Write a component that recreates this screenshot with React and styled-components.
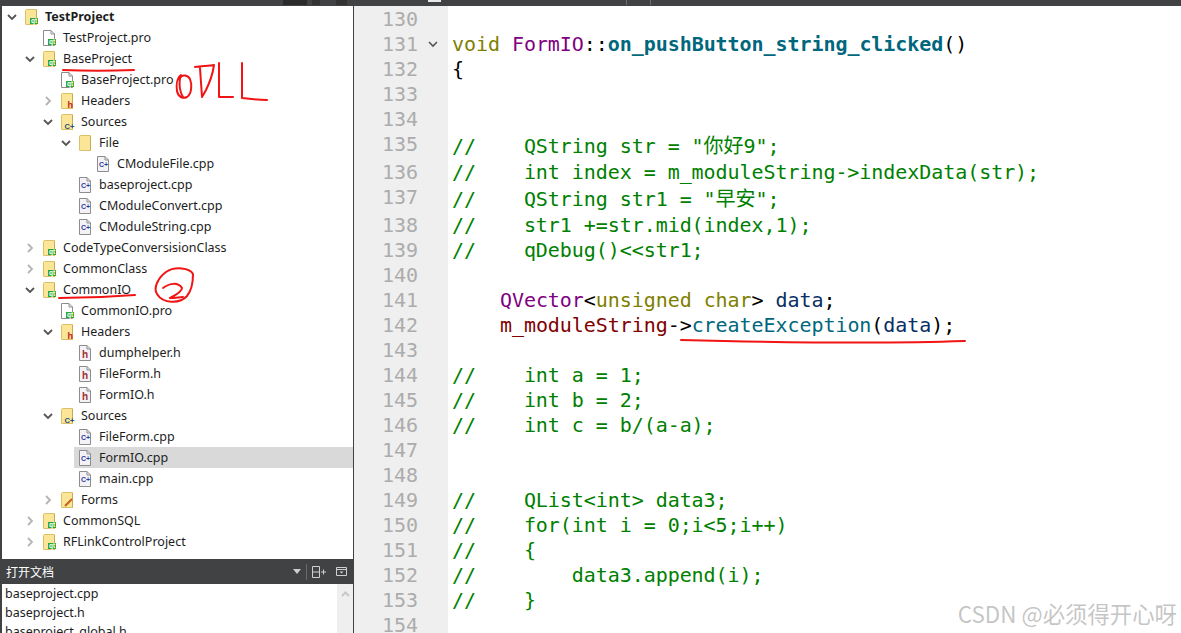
import styled, { createGlobalStyle } from "styled-components";

const GlobalStyle = createGlobalStyle`
  html, body {
    margin: 0;
    padding: 0;
    background: #fff;
    overflow: hidden;
  }
`;

const Page = styled.div`
  position: relative;
  width: 1181px;
  height: 633px;
  overflow: hidden;
  display: flex;
  flex-direction: column;
  background: #404244;
`;

const TopBar = styled.div`
  height: 6px;
  flex: none;
  display: flex;
  background: #404244;
`;

const BarChip = styled.span`
  width: ${(p) => p.$w}px;
  height: ${(p) => p.$h || 5}px;
  margin-left: ${(p) => p.$gap}px;
  flex: none;
  background: ${(p) => p.$color};
`;

const Body = styled.div`
  flex: 1;
  min-height: 0;
  display: flex;
`;

const Side = styled.aside`
  width: 351px;
  flex: none;
  margin-left: 2px;
  display: flex;
  flex-direction: column;
  background: #fff;
  font-family: "Noto Sans", sans-serif;
  font-size: 12.5px;
  color: #1d1d1d;
`;

const Tree = styled.div`
  flex: 1;
  min-height: 0;
`;

const Row = styled.div`
  height: 21px;
  display: flex;
  align-items: center;
  padding-left: ${(p) => p.$depth * 18 + 3}px;
  white-space: nowrap;
  font-weight: ${(p) => (p.$bold ? 700 : 400)};
  background: ${(p) => (p.$selected ? "linear-gradient(90deg, #fff 72px, #d9d9d9 72px)" : "transparent")};
`;

const Arrow = styled.span`
  width: 14px;
  height: 14px;
  flex: none;
  margin-right: 6px;
  display: flex;
  align-items: center;
  justify-content: center;
`;

const Name = styled.span`
  margin-left: 6px;
`;

const DocsHeader = styled.div`
  height: 25px;
  flex: none;
  margin-left: -2px;
  background: #404244;
  color: #fff;
  display: flex;
  align-items: center;
  padding-left: 6px;
  padding-right: 6px;
  font-family: "Noto Sans CJK SC", sans-serif;
  font-size: 12px;
`;

const DocsTitle = styled.span`
  flex: 1;
`;

const HeaderDivider = styled.span`
  width: 1px;
  height: 16px;
  margin: 0 5px;
  background: #6a6c6e;
`;

const HeaderTools = styled.div`
  display: flex;
  align-items: center;
  gap: 10px;
`;

const DocsList = styled.div`
  height: 49px;
  flex: none;
  display: flex;
  overflow: hidden;
`;

const DocsItems = styled.div`
  flex: 1;
  padding-left: 3px;
`;

const DocItem = styled.div`
  height: 19px;
  line-height: 19px;
`;

const DocsScroll = styled.div`
  width: 16px;
  flex: none;
  background: #efefef;
  display: flex;
  justify-content: center;
  padding-top: 7px;
`;

const Editor = styled.main`
  flex: 1;
  min-width: 0;
  display: flex;
  border-left: 1px solid #404244;
  background: #fff;
  font-family: "DejaVu Sans Mono", monospace;
  font-size: 20px;
  letter-spacing: -0.06px;
`;

const Gutter = styled.div`
  width: 94px;
  flex: none;
  padding-top: 1px;
  background: #efefef;
  color: #acacac;
`;

const GutterLine = styled.div`
  position: relative;
  height: ${(p) => p.$h}px;
  line-height: 25px;
  padding-left: 28px;
`;

const FoldMark = styled.span`
  position: absolute;
  left: 73px;
  top: 2px;
  line-height: 0;
`;

const Code = styled.div`
  flex: 1;
  min-width: 0;
  padding-top: 1px;
  padding-left: 4px;
  white-space: pre;
  color: #000;
`;

const CodeLine = styled.div`
  height: ${(p) => p.$h}px;
  line-height: 25px;
`;

const Keyword = styled.span`
  color: #808000;
`;

const TypeName = styled.span`
  color: #800080;
`;

const Member = styled.span`
  color: #800000;
`;

const LocalVar = styled.span`
  color: #092e64;
`;

const Method = styled.span`
  color: #00677c;
  font-weight: ${(p) => (p.$bold ? 700 : 400)};
`;

const Comment = styled.span`
  color: #008000;
`;

const Cjk = styled.span`
  font-family: "Noto Sans CJK SC", sans-serif;
  letter-spacing: 0;
`;

const Watermark = styled.div`
  position: absolute;
  right: 4px;
  bottom: 5px;
  font-family: "Noto Sans CJK SC", sans-serif;
  font-size: 22.4px;
  line-height: 30px;
  color: rgba(140, 140, 140, 0.5);
  text-shadow: 1px 1px 0 rgba(255, 255, 255, 0.7);
`;

const Ink = styled.svg`
  position: absolute;
  left: 0;
  top: 0;
  pointer-events: none;
`;

const Chevron = ({ open }) => (
  <svg width="12" height="12" viewBox="0 0 12 12" fill="none">
    {open ? (
      <path d="M2 4l4 4 4-4" stroke="#555" strokeWidth="1.8" />
    ) : (
      <path d="M4 2l4 4-4 4" stroke="#b4b4b4" strokeWidth="1.8" />
    )}
  </svg>
);

const Badge = ({ kind }) => {
  if (kind === "qt") {
    return (
      <g>
        <rect x="5" y="9" width="8" height="6" fill="#2ea52e" />
        <text x="9" y="14" fontSize="6.5" fontWeight="700" textAnchor="middle" fill="#fff" fontFamily="Liberation Sans">qt</text>
      </g>
    );
  }
  if (kind === "h") {
    return <text x="6.5" y="15" fontSize="9" fontWeight="700" fill="#c8201e" fontFamily="Liberation Sans">h</text>;
  }
  if (kind === "cpp") {
    return <text x="3.5" y="15" fontSize="7.5" fontWeight="700" fill="#25507e" fontFamily="Liberation Sans">C+</text>;
  }
  if (kind === "form") {
    return <path d="M11 7L4 14" stroke="#c4621c" strokeWidth="2" />;
  }
  return null;
};

const FolderIcon = ({ kind }) => (
  <svg width="14" height="16" viewBox="0 0 14 16" style={{ flex: "none", overflow: "visible" }}>
    <path d="M0.5 1.5C0.5 1 1 .5 1.5 .5H11.5V15.5H1C.7 15.5 .5 15.3 .5 15Z" fill="#fbe596" stroke="#dcc068" />
    <path d="M11.5 1V15.5" stroke="#c9aa52" />
    <Badge kind={kind} />
  </svg>
);

const FileIcon = ({ kind }) => (
  <svg width="14" height="16" viewBox="0 0 14 16" style={{ flex: "none", overflow: "visible" }}>
    <path d="M.5 .5H8L11.5 4V15.5H.5Z" fill={kind === "qt" ? "#fff" : "#f4f2f6"} stroke="#8d8d8d" />
    <path d="M8 .5V4H11.5" fill="none" stroke="#8d8d8d" />
    {kind === "h" ? (
      <text x="3" y="13" fontSize="10" fontWeight="700" fill="#a03030" fontFamily="Liberation Sans">h</text>
    ) : kind === "cpp" ? (
      <text x="2" y="11" fontSize="7" fontWeight="700" fill="#2b3fa0" fontFamily="Liberation Sans">C+</text>
    ) : (
      <Badge kind={kind} />
    )}
  </svg>
);

const treeRows = [
  { d: 0, open: true, folder: "qt", name: "TestProject", bold: true },
  { d: 1, file: "qt", name: "TestProject.pro" },
  { d: 1, open: true, folder: "qt", name: "BaseProject" },
  { d: 2, file: "qt", name: "BaseProject.pro" },
  { d: 2, open: false, folder: "h", name: "Headers" },
  { d: 2, open: true, folder: "cpp", name: "Sources" },
  { d: 3, open: true, folder: "plain", name: "File" },
  { d: 4, file: "cpp", name: "CModuleFile.cpp" },
  { d: 3, file: "cpp", name: "baseproject.cpp" },
  { d: 3, file: "cpp", name: "CModuleConvert.cpp" },
  { d: 3, file: "cpp", name: "CModuleString.cpp" },
  { d: 1, open: false, folder: "qt", name: "CodeTypeConversisionClass" },
  { d: 1, open: false, folder: "qt", name: "CommonClass" },
  { d: 1, open: true, folder: "qt", name: "CommonIO" },
  { d: 2, file: "qt", name: "CommonIO.pro" },
  { d: 2, open: true, folder: "h", name: "Headers" },
  { d: 3, file: "h", name: "dumphelper.h" },
  { d: 3, file: "h", name: "FileForm.h" },
  { d: 3, file: "h", name: "FormIO.h" },
  { d: 2, open: true, folder: "cpp", name: "Sources" },
  { d: 3, file: "cpp", name: "FileForm.cpp" },
  { d: 3, file: "cpp", name: "FormIO.cpp", selected: true },
  { d: 3, file: "cpp", name: "main.cpp" },
  { d: 2, open: false, folder: "form", name: "Forms" },
  { d: 1, open: false, folder: "qt", name: "CommonSQL" },
  { d: 1, open: false, folder: "qt", name: "RFLinkControlProject" },
];

const comment = (text) => <Comment>{text}</Comment>;

const codeLines = [
  { n: 130, h: 25, c: "" },
  {
    n: 131, h: 25, fold: true,
    c: (
      <>
        <Keyword>void</Keyword> <TypeName>FormIO</TypeName>::<Method $bold>on_pushButton_string_clicked</Method>()
      </>
    ),
  },
  { n: 132, h: 25, c: "{" },
  { n: 133, h: 25, c: "" },
  { n: 134, h: 25, c: "" },
  {
    n: 135, h: 28,
    c: <Comment>{"//    QString str = \""}<Cjk>你好</Cjk>{"9\";"}</Comment>,
  },
  { n: 136, h: 25, c: comment("//    int index = m_moduleString->indexData(str);") },
  {
    n: 137, h: 28,
    c: <Comment>{"//    QString str1 = \""}<Cjk>早安</Cjk>{"\";"}</Comment>,
  },
  { n: 138, h: 25, c: comment("//    str1 +=str.mid(index,1);") },
  { n: 139, h: 25, c: comment("//    qDebug()<<str1;") },
  { n: 140, h: 25, c: "" },
  {
    n: 141, h: 25,
    c: (
      <>
        {"    "}<TypeName>QVector</TypeName>{"<"}<Keyword>unsigned char</Keyword>{"> "}<LocalVar>data</LocalVar>;
      </>
    ),
  },
  {
    n: 142, h: 25,
    c: (
      <>
        {"    "}<Member>m_moduleString</Member>{"->"}<Method>createException</Method>(<LocalVar>data</LocalVar>);
      </>
    ),
  },
  { n: 143, h: 25, c: "" },
  { n: 144, h: 25, c: comment("//    int a = 1;") },
  { n: 145, h: 25, c: comment("//    int b = 2;") },
  { n: 146, h: 25, c: comment("//    int c = b/(a-a);") },
  { n: 147, h: 25, c: "" },
  { n: 148, h: 25, c: "" },
  { n: 149, h: 25, c: comment("//    QList<int> data3;") },
  { n: 150, h: 25, c: comment("//    for(int i = 0;i<5;i++)") },
  { n: 151, h: 25, c: comment("//    {") },
  { n: 152, h: 25, c: comment("//        data3.append(i);") },
  { n: 153, h: 25, c: comment("//    }") },
  { n: 154, h: 25, c: "" },
];

export default function App() {
  return (
    <Page>
      <GlobalStyle />
      <TopBar>
        <BarChip $w={24} $gap={283} $color="#2b2b2b" />
        <BarChip $w={8} $gap={5} $color="#333" />
        <BarChip $w={11} $gap={16} $color="#333" />
        <BarChip $w={13} $h={2} $gap={81} $color="#e8e8e8" />
        <BarChip $w={1} $gap={185} $color="#6a6c6e" />
        <BarChip $w={1} $gap={23} $color="#6a6c6e" />
      </TopBar>
      <Body>
        <Side>
          <Tree>
            {treeRows.map((row, i) => (
              <Row key={i} $depth={row.d} $bold={row.bold} $selected={row.selected}>
                <Arrow>{row.open !== undefined && <Chevron open={row.open} />}</Arrow>
                {row.folder ? <FolderIcon kind={row.folder} /> : <FileIcon kind={row.file} />}
                <Name>{row.name}</Name>
              </Row>
            ))}
          </Tree>
          <DocsHeader>
            <DocsTitle>打开文档</DocsTitle>
            <svg width="8" height="5" viewBox="0 0 8 5"><path d="M0 0h8L4 5z" fill="#cfcfcf" /></svg>
            <HeaderDivider />
            <HeaderTools>
              <svg width="14" height="12" viewBox="0 0 14 12" fill="none" stroke="#cfcfcf">
                <path d="M.5 .5h7v11h-7zM.5 6h7M9 6h5M11.5 3.5v5" />
              </svg>
              <svg width="11" height="9" viewBox="0 0 11 9" fill="none" stroke="#cfcfcf">
                <path d="M.5 .5h10v8H.5zM.5 2.5h10" />
                <path d="M3.5 4.5h4L5.5 6.5z" fill="#cfcfcf" stroke="none" />
              </svg>
            </HeaderTools>
          </DocsHeader>
          <DocsList>
            <DocsItems>
              <DocItem>baseproject.cpp</DocItem>
              <DocItem>baseproject.h</DocItem>
              <DocItem>baseproject_global.h</DocItem>
            </DocsItems>
            <DocsScroll>
              <svg width="9" height="6" viewBox="0 0 9 6" fill="none">
                <path d="M1 5l3.5-3.5L8 5" stroke="#c8c8c8" strokeWidth="2" />
              </svg>
            </DocsScroll>
          </DocsList>
        </Side>
        <Editor>
          <Gutter>
            {codeLines.map((line) => (
              <GutterLine key={line.n} $h={line.h}>
                {line.n}
                {line.fold && (
                  <FoldMark>
                    <svg width="12" height="20" viewBox="0 0 12 20" fill="none">
                      <path d="M2 8l4 4 4-4" stroke="#555" strokeWidth="1.6" />
                    </svg>
                  </FoldMark>
                )}
              </GutterLine>
            ))}
          </Gutter>
          <Code>
            {codeLines.map((line) => (
              <CodeLine key={line.n} $h={line.h}>{line.c}</CodeLine>
            ))}
          </Code>
        </Editor>
      </Body>
      <Watermark>CSDN @必须得开心呀</Watermark>
      <Ink width="1181" height="633" viewBox="0 0 1181 633" fill="none" stroke="#f01414" strokeWidth="2" strokeLinecap="round" strokeLinejoin="round">
        <path d="M63 70C85 71 110 71 134 70" />
        <path d="M181 75C177 78 176 85 177 91C178 97 183 99 187 97C192 94 192 84 190 79C188 75 182 74 180 78C179 84 180 92 183 97" />
        <path d="M195 67C203 66 210 66 214 65C213 72 209 84 206 90L202 97L200 68" />
        <path d="M219 63L219 97H233" />
        <path d="M242 63L242 98C250 99 258 100 267 100" />
        <path d="M59 298C85 298 110 297 135 295" />
        <path d="M193 274C190 268 175 266 166 272C158 278 153 288 157 294C163 304 180 304 187 296C192 290 193 282 193 274" />
        <path d="M163 288C170 283 178 282 182 288C182 292 174 296 170 298C175 298 180 297 183 297" />
        <path d="M681 340C760 342 880 344 965 341" />
      </Ink>
    </Page>
  );
}
